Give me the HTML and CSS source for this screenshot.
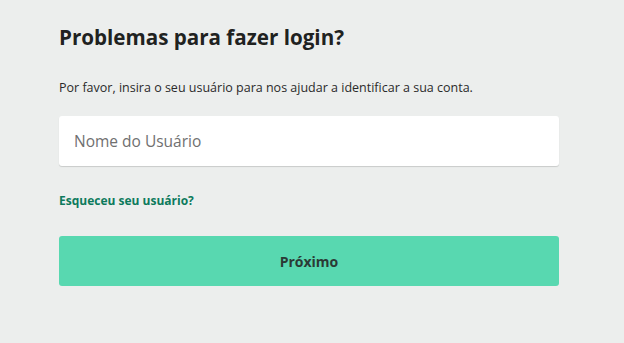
FILE: index.html
```html
<!DOCTYPE html>
<html lang="pt-BR">
<head>
<meta charset="utf-8">
<link rel="stylesheet" href="styles.css">
</head>
<body>
<main class="panel">
  <h1 class="title">Problemas para fazer login?</h1>
  <p class="lead">Por favor, insira o seu usuário para nos ajudar a identificar a sua conta.</p>
  <input class="field" type="text" placeholder="Nome do Usuário">
  <a class="link" href="#">Esqueceu seu usuário?</a>
  <button class="btn" type="button">Próximo</button>
</main>
</body>
</html>
```
FILE: styles.css
```css
html, body {
  margin: 0;
  padding: 0;
  background: #eceeed;
  height: 100%;
}
body {
  font-family: "Open Sans", "Noto Sans", sans-serif;
  color: #222;
}
.panel {
  width: 500px;
  margin-left: 59px;
  padding-top: 23px;
  display: flex;
  flex-direction: column;
}
.title {
  margin: 0;
  font-size: 20.6px;
  font-weight: 700;
  line-height: 28px;
  color: #1f2221;
}
.lead {
  margin: 28px 0 0;
  font-size: 12.5px;
  line-height: 18px;
  color: #2a2a2a;
}
.field {
  margin-top: 19px;
  height: 50px;
  box-sizing: border-box;
  border: none;
  border-radius: 3px;
  background: #fff;
  box-shadow: 0 1px 1px rgba(0,0,0,0.15);
  padding: 0 15px;
  font-family: inherit;
  font-size: 15.5px;
  color: #333;
  outline: none;
}
.field::placeholder {
  color: #707070;
}
.link {
  margin-top: 26px;
  font-size: 12px;
  font-weight: 700;
  line-height: 18px;
  color: #0d7a5c;
  text-decoration: none;
  align-self: flex-start;
}
.btn {
  margin-top: 26px;
  height: 50px;
  border: none;
  border-radius: 3px;
  background: #58d8b0;
  font-family: inherit;
  font-size: 14px;
  font-weight: 700;
  color: #2b3b36;
  cursor: pointer;
}
```
